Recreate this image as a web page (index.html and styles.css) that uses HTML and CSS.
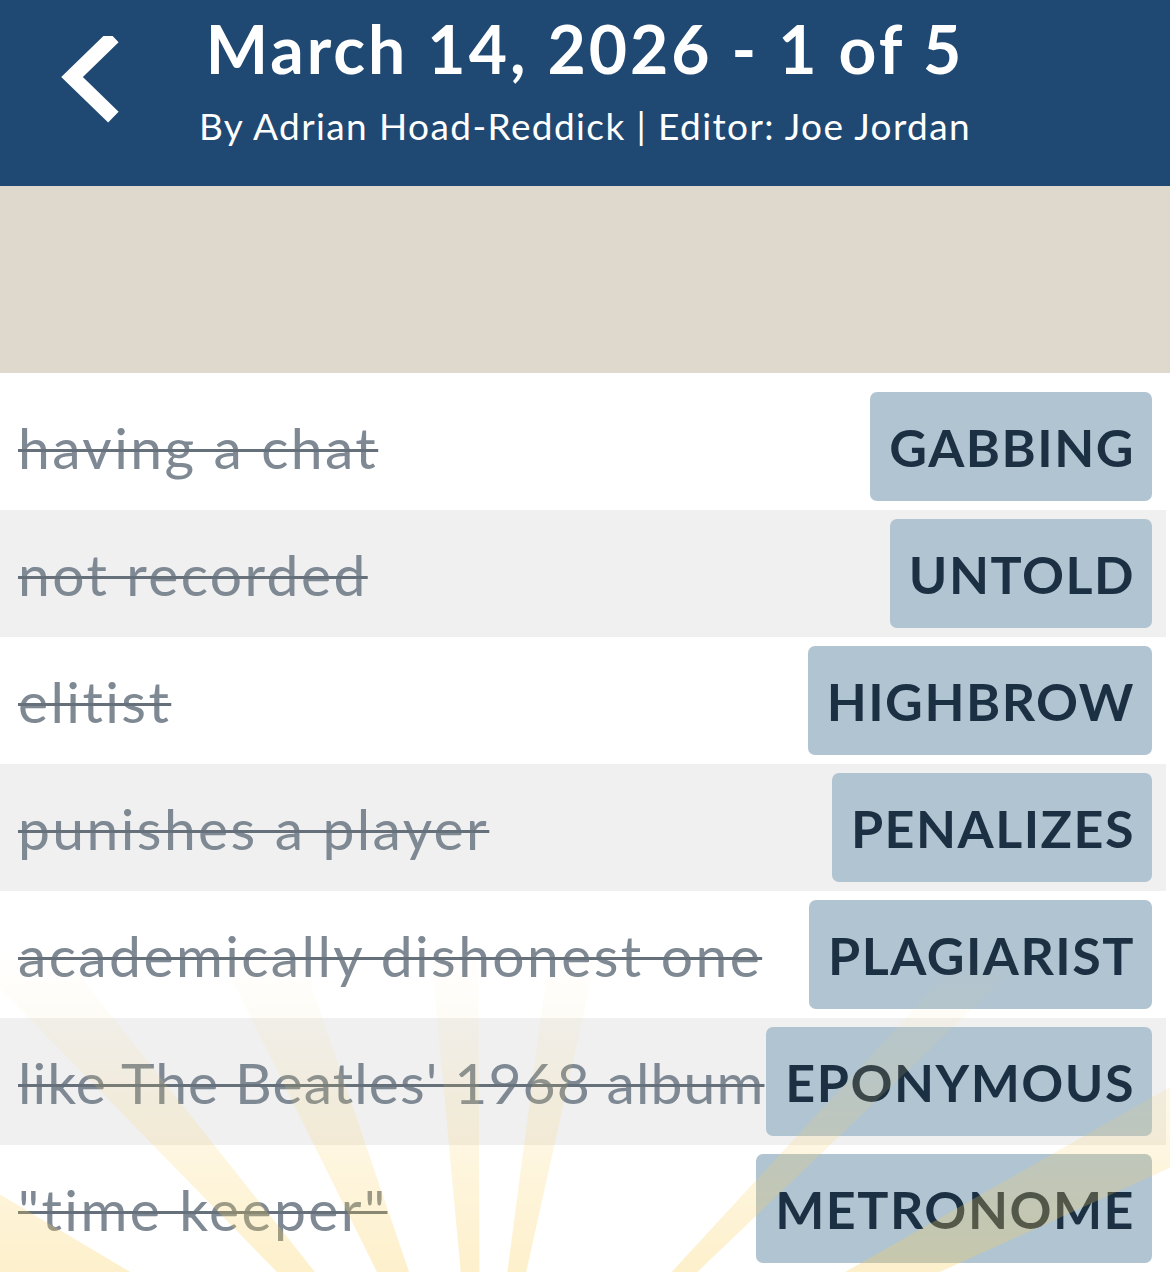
FILE: index.html
```html
<!DOCTYPE html>
<html lang="en">
<head>
<meta charset="utf-8">
<title>March 14, 2026 - 1 of 5</title>
<link rel="stylesheet" href="styles.css">
</head>
<body>
<div class="page">
  <header class="topbar">
    <div class="back">
      <svg width="60" height="90" viewBox="0 0 60 90"><path d="M48 6 L12 41 L48 76" fill="none" stroke="#ffffff" stroke-width="15" stroke-linejoin="miter" stroke-linecap="square"/></svg>
    </div>
    <div class="titles">
      <h1 class="title">March 14, 2026 - 1 of 5</h1>
      <p class="byline">By Adrian Hoad-Reddick | Editor: Joe Jordan</p>
    </div>
    <div></div>
  </header>
  <div class="banner"></div>
  <ul class="list">
    <li class="row"><span class="clue">having a chat</span><span class="answer">GABBING</span></li>
    <li class="row alt"><span class="clue">not recorded</span><span class="answer">UNTOLD</span></li>
    <li class="row"><span class="clue">elitist</span><span class="answer">HIGHBROW</span></li>
    <li class="row alt"><span class="clue">punishes a player</span><span class="answer">PENALIZES</span></li>
    <li class="row"><span class="clue">academically dishonest one</span><span class="answer">PLAGIARIST</span></li>
    <li class="row alt"><span class="clue tight">like The Beatles' 1968 album</span><span class="answer">EPONYMOUS</span></li>
    <li class="row"><span class="clue">"time keeper"</span><span class="answer">METRONOME</span></li>
  </ul>
  <svg class="burst" width="1170" height="340" viewBox="0 0 1170 340">
    <defs>
      <linearGradient id="fade" gradientUnits="userSpaceOnUse" x1="0" y1="340" x2="0" y2="20">
        <stop offset="0" stop-color="#fbcf55" stop-opacity="0.75"/>
        <stop offset="0.5" stop-color="#fbd466" stop-opacity="0.4"/>
        <stop offset="1" stop-color="#fde08a" stop-opacity="0"/>
      </linearGradient>
    </defs>
    <g fill="url(#fade)">
      <polygon points="480,548 -80,215 -80,305"/>
      <polygon points="480,548 -55,0 45,0"/>
      <polygon points="480,548 159,-100 259,-100"/>
      <polygon points="480,548 420,-100 478,-100"/>
      <polygon points="480,548 560,-60 615,-60"/>
      <polygon points="480,548 1077,-100 1157,-100"/>
      <polygon points="480,548 1249,110 1249,200"/>
    </g>
  </svg>
</div>
</body>
</html>
```
FILE: styles.css
```css
* { box-sizing: border-box; }
html, body { margin: 0; padding: 0; }
body {
  background: #ffffff;
  font-family: Lato, "Noto Sans", "Liberation Sans", sans-serif;
}
.page {
  position: relative;
  width: 1170px;
  height: 1272px;
  overflow: hidden;
}
.topbar {
  height: 186px;
  background: #1f4872;
  display: grid;
  grid-template-columns: 1fr auto 1fr;
  align-items: start;
  color: #ffffff;
}
.back {
  padding: 36px 0 0 60px;
}
.back svg { display: block; }
.titles {
  text-align: center;
  padding-top: 9px;
}
.title {
  margin: 0;
  font-size: 66px;
  font-weight: 700;
  line-height: 80px;
  letter-spacing: 3px;
}
.byline {
  margin: 13px 0 0;
  font-size: 37px;
  font-weight: 400;
  line-height: 48px;
  letter-spacing: 1.4px;
}
.banner {
  height: 187px;
  background: #dfd8cc;
}
.list {
  list-style: none;
  margin: 0;
  padding: 10px 4px 0 0;
}
.row {
  height: 127px;
  display: flex;
  align-items: center;
  justify-content: space-between;
  gap: 10px;
  padding: 0 14px 0 18px;
  background: #ffffff;
}
.row.alt { background: #f0f0f0; }
.clue {
  font-size: 57px;
  letter-spacing: 2.4px;
  color: #7f8993;
  text-decoration: line-through;
  text-decoration-color: #65707b;
  text-decoration-thickness: 3px;
  white-space: nowrap;
  min-width: 0;
}
.clue.tight { letter-spacing: 1.1px; }
.answer {
  flex-shrink: 0;
  height: 109px;
  display: flex;
  align-items: center;
  padding: 0 17px 0 19px;
  background: #b1c4d1;
  border-radius: 7px;
  color: #1c3043;
  font-size: 52px;
  font-weight: 700;
  letter-spacing: 1.5px;
  white-space: nowrap;
}
.burst {
  position: absolute;
  left: 0;
  bottom: 0;
  pointer-events: none;
  opacity: 0.4;
}
```
